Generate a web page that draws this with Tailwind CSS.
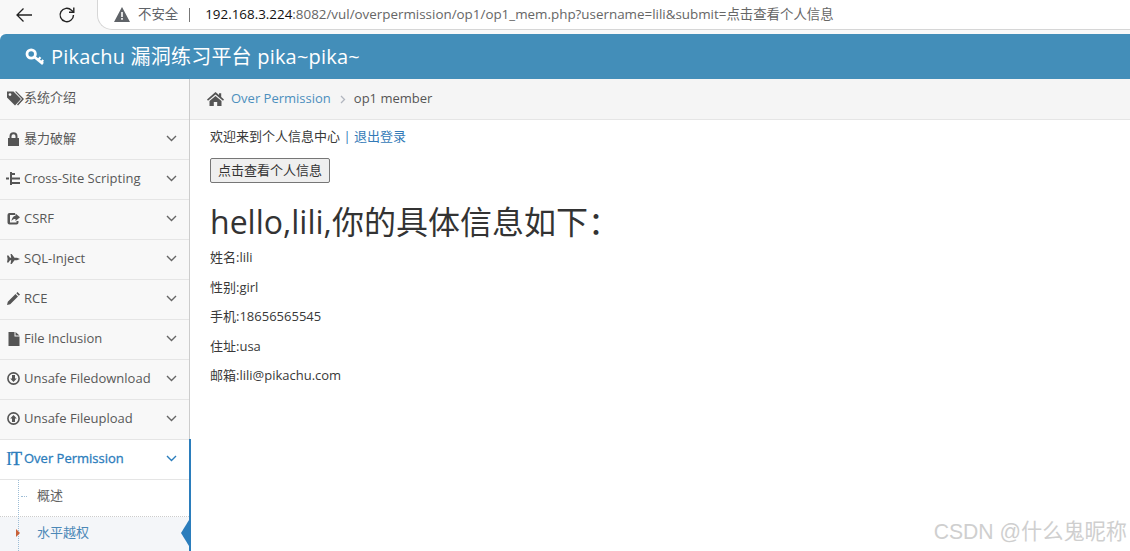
<!doctype html>
<html lang="en">

<head>
  <meta charset="UTF-8" />
  <title>Pikachu</title>
  <script src="https://cdn.jsdelivr.net/npm/@tailwindcss/browser@4"></script>
</head>

<body class="bg-white overflow-hidden font-['Open_Sans','Noto_Sans_CJK_SC',sans-serif] text-[#393939]">
  <div class="relative w-[1130px] h-[551px] overflow-hidden">
    <!-- browser bar -->
    <div class="h-[34px] bg-[#f8f8f8] flex items-start">
      <div class="w-[97px] h-[29px] flex items-center shrink-0">
        <svg class="ml-[15px]" width="18" height="16" viewBox="0 0 18 16" fill="none" stroke="#222" stroke-width="1.3">
          <path d="M17 8H2M8.5 1.5 2 8l6.5 6.5" />
        </svg>
        <svg class="ml-[25px]" width="18" height="18" viewBox="0 0 18 18" fill="none" stroke="#222" stroke-width="1.4">
          <path d="M15.5 9a6.7 6.7 0 1 1-2-4.8L15.5 6" />
          <path d="M15.8 1.5V6.3H11" />
        </svg>
      </div>
      <div class="flex-1 h-[30px] bg-white border-b border-l border-[#d6d6d6] rounded-bl-[15px] flex items-center pl-[16px] text-[13.4px] whitespace-nowrap">
        <svg width="16" height="15" viewBox="0 0 16 15">
          <path fill="#5f6368" d="M8 0 16 15H0Z" />
          <path fill="#fff" d="M7.2 5h1.6v5H7.2zM7.2 11h1.6v1.7H7.2z" />
        </svg>
        <span class="ml-[8px] text-[#5f6368]">不安全</span>
        <span class="ml-[11px] w-px h-[14px] bg-[#777]"></span>
        <span class="ml-[15px] text-[#111]">192.168.3.224</span><span class="text-[#666]">:8082/vul/overpermission/op1/op1_mem.php?username=lili&amp;submit=点击查看个人信息</span>
      </div>
    </div>

    <!-- blue header -->
    <div class="h-[45px] bg-[#438eb9] rounded-tl-[6px] flex items-center pl-[25px] text-white text-[20px] whitespace-nowrap">
      <svg width="19" height="18" viewBox="0 0 19 18" fill="none" stroke="#fff">
        <circle cx="6.200" cy="6" r="4.200" stroke-width="2.800" />
        <path d="M9.500 9 18 15.800" stroke-width="2.800" />
        <path d="m13.500 11.500 2-2.200M16.500 14l1.800-2" stroke-width="2.200" />
      </svg>
      <span class="ml-[7px] tracking-[0.2px]">Pikachu 漏洞练习平台 pika~pika~</span>
    </div>

    <div class="flex h-[472px]">
      <!-- sidebar -->
      <aside class="w-[190px] shrink-0 border-r border-[#ccc] bg-[#f8f8f8] text-[13px] text-[#585858] relative">
        <div class="h-[41px] pb-[2px] border-b border-[#e5e5e5] flex items-center pl-[7px]">
          <svg width="17" height="15" viewBox="0 0 17 15" fill="#555">
            <path fill-rule="evenodd" d="M0 .5h6.500L14 8l-6 6.500L0 6.500ZM3 2.200a1.400 1.400 0 1 0 0 2.800 1.400 1.400 0 0 0 0-2.800Z" />
            <path d="M8 .5h1.500L17 8l-6 6.500-1-1L15 8Z" />
          </svg>
          <span>系统介绍</span>
        </div>

        <div class="h-10 pb-[2px] border-b border-[#e5e5e5] flex items-center pl-[7px]">
          <svg class="w-[13px]" width="13" height="14" viewBox="0 0 13 14" fill="#555">
            <path d="M1 6h1.500V4.200a4 4 0 0 1 8 0V6H12v8H1ZM4.500 6h4V4.200a2 2 0 0 0-4 0Z" fill-rule="evenodd" />
          </svg>
          <span class="ml-[4px] flex-1">暴力破解</span>
          <svg class="mr-[12px]" width="11" height="7" viewBox="0 0 11 7" fill="none" stroke="#666" stroke-width="1.4"><path d="m1 1 4.500 4.500L10 1" /></svg>
        </div>

        <div class="h-10 pb-[2px] border-b border-[#e5e5e5] flex items-center pl-[6px]">
          <svg class="w-[14px]" width="14" height="13" viewBox="0 0 14 13" fill="#555">
            <path d="M0 5.500h3v2H0zM4 0h2v13H4zM6 1h3v2H6zM6 5.500h8v2H6zM6 10h8v2H6z" />
          </svg>
          <span class="ml-[4px] flex-1">Cross-Site Scripting</span>
          <svg class="mr-[12px]" width="11" height="7" viewBox="0 0 11 7" fill="none" stroke="#666" stroke-width="1.4"><path d="m1 1 4.500 4.500L10 1" /></svg>
        </div>

        <div class="h-10 pb-[2px] border-b border-[#e5e5e5] flex items-center pl-[7px]">
          <svg class="w-[13px]" width="13" height="13" viewBox="0 0 13 13" fill="#555">
            <path d="M2.500 1H8v2H3v7.500h6.500V9h2v1.500a2 2 0 0 1-2 2h-7a2 2 0 0 1-2-2V3a2 2 0 0 1 2-2Z" />
            <path d="M8.500 1.500 13 5.200 8.500 9V7C6.500 7 5.200 7.600 4.500 9.500 4.500 6.500 6 4 8.500 3.700Z" />
          </svg>
          <span class="ml-[4px] flex-1">CSRF</span>
          <svg class="mr-[12px]" width="11" height="7" viewBox="0 0 11 7" fill="none" stroke="#666" stroke-width="1.4"><path d="m1 1 4.500 4.500L10 1" /></svg>
        </div>

        <div class="h-10 pb-[2px] border-b border-[#e5e5e5] flex items-center pl-[7px]">
          <svg class="w-[13px]" width="13" height="10" viewBox="0 0 13 10" fill="#555">
            <path d="M0 1.500h1.500L3 3.800h1.200L3.500 0h1.200l2.800 3.800H10L13 5l-3 1.200H7.500L4.700 10H3.500l.7-3.800H3L1.500 8.500H0l.6-3.500Z" />
          </svg>
          <span class="ml-[4px] flex-1">SQL-Inject</span>
          <svg class="mr-[12px]" width="11" height="7" viewBox="0 0 11 7" fill="none" stroke="#666" stroke-width="1.4"><path d="m1 1 4.500 4.500L10 1" /></svg>
        </div>

        <div class="h-10 pb-[2px] border-b border-[#e5e5e5] flex items-center pl-[7px]">
          <svg class="w-[13px]" width="13" height="13" viewBox="0 0 13 13" fill="#555">
            <path d="M0 13 .8 9.800 8.500 2l2.500 2.500L3.200 12.200ZM9.300 1.200 10.500 0 13 2.500 11.800 3.700Z" />
          </svg>
          <span class="ml-[4px] flex-1">RCE</span>
          <svg class="mr-[12px]" width="11" height="7" viewBox="0 0 11 7" fill="none" stroke="#666" stroke-width="1.4"><path d="m1 1 4.500 4.500L10 1" /></svg>
        </div>

        <div class="h-10 pb-[2px] border-b border-[#e5e5e5] flex items-center pl-[8px]">
          <svg class="w-[12px]" width="11" height="14" viewBox="0 0 11 14" fill="#555">
            <path d="M0 0h6v4.500h5V14H0ZM7 0l4 3.500H7Z" />
          </svg>
          <span class="ml-[4px] flex-1">File Inclusion</span>
          <svg class="mr-[12px]" width="11" height="7" viewBox="0 0 11 7" fill="none" stroke="#666" stroke-width="1.4"><path d="m1 1 4.500 4.500L10 1" /></svg>
        </div>

        <div class="h-10 pb-[2px] border-b border-[#e5e5e5] flex items-center pl-[7px]">
          <svg class="w-[13px]" width="13" height="13" viewBox="0 0 13 13">
            <circle cx="6.500" cy="6.500" r="5.600" fill="none" stroke="#555" stroke-width="1.600" />
            <path fill="#555" d="M5 3h3v3.500h1.800L6.500 10 3.200 6.500H5Z" />
          </svg>
          <span class="ml-[4px] flex-1">Unsafe Filedownload</span>
          <svg class="mr-[12px]" width="11" height="7" viewBox="0 0 11 7" fill="none" stroke="#666" stroke-width="1.4"><path d="m1 1 4.500 4.500L10 1" /></svg>
        </div>

        <div class="h-10 pb-[2px] border-b border-[#e5e5e5] flex items-center pl-[7px]">
          <svg class="w-[13px]" width="13" height="13" viewBox="0 0 13 13">
            <circle cx="6.500" cy="6.500" r="5.600" fill="none" stroke="#555" stroke-width="1.600" />
            <path fill="#555" d="M5 10h3V6.500h1.800L6.500 3 3.200 6.500H5Z" />
          </svg>
          <span class="ml-[4px] flex-1">Unsafe Fileupload</span>
          <svg class="mr-[12px]" width="11" height="7" viewBox="0 0 11 7" fill="none" stroke="#666" stroke-width="1.4"><path d="m1 1 4.500 4.500L10 1" /></svg>
        </div>

        <!-- active group -->
        <div class="h-10 pb-[2px] border-b border-[#e5e5e5] bg-white flex items-center pl-[6px] text-[#2b7dbc]">
          <span class="w-[18px] flex items-baseline font-['Liberation_Serif',serif] text-[18px] leading-none"><span class="w-[5px] font-normal">I</span><span class="font-normal [-webkit-text-stroke:0.4px_#2b7dbc]">T</span></span>
          <span class="flex-1 [-webkit-text-stroke:0.3px_#2b7dbc]">Over Permission</span>
          <svg class="mr-[12px]" width="11" height="7" viewBox="0 0 11 7" fill="none" stroke="#2b7dbc" stroke-width="1.4"><path d="m1 1 4.500 4.500L10 1" /></svg>
        </div>
        <div class="relative h-[37px] pb-[4px] bg-white border-b border-dotted border-[#ccc] flex items-center pl-[37px] text-[#616161]">
          <span class="absolute left-[21px] top-[16px] w-[6px] border-t border-dotted border-[#9dbdd6]"></span>
          <span>概述</span>
        </div>
        <div class="relative h-[35px] pb-[4px] bg-[#f4f6f9] flex items-center pl-[37px] text-[#4b88b7]">
          <span class="absolute left-[16px] top-[12px] z-10 border-y-[4px] border-l-[4px] border-y-transparent border-l-[#c86139]"></span>
          <span>水平越权</span>
        </div>
        <span class="absolute left-[18px] top-[401px] h-[71px] border-l border-dotted border-[#9dbdd6]"></span>
        <span class="absolute right-[-2px] top-[360px] h-[112px] w-[2px] bg-[#2b7dbc]"></span>
        <span class="absolute right-0 top-[441px] h-[26px] w-[8px] bg-[#2b7dbc] [clip-path:polygon(0_50%,100%_0,100%_100%)]"></span>
      </aside>

      <!-- main -->
      <main class="flex-1 min-w-0 text-[13px]">
        <div class="h-[41px] bg-[#f5f5f5] border-b border-[#e5e5e5] flex items-center pl-[17px] whitespace-nowrap">
          <svg width="17" height="14" viewBox="0 0 17 14" fill="#555">
            <path d="M8.500 0 12 3V1.200h2.200V5L17 7.500 16 8.700 8.500 2.500 1 8.700 0 7.500Z" />
            <path d="M8.500 4 14.500 9v5H10.200V10H6.800v4H2.500V9Z" />
          </svg>
          <span class="ml-[7px] text-[#4c8fbd]">Over Permission</span>
          <svg class="ml-[9px]" width="6" height="9" viewBox="0 0 6 9" fill="none" stroke="#b2b6bf" stroke-width="1.3"><path d="m1 1 3.500 3.500L1 8" /></svg>
          <span class="ml-[8px] text-[#555]">op1 member</span>
        </div>
        <div class="pl-[20px] pt-[7px]">
          <p class="leading-[19px]">欢迎来到个人信息中心 <span class="text-[#337ab7]">| 退出登录</span></p>
          <button class="block mt-[12px] w-[120px] h-[25px] bg-[#efefef] border border-[#767676] rounded-[2px] text-[13px] text-[#333]">点击查看个人信息</button>
          <h1 class="mt-[22px] text-[32px] leading-[33px] text-[#333]">hello,lili,你的具体信息如下：</h1>
          <div class="mt-[10px] space-y-[10.6px] leading-[19px]">
            <p>姓名:lili</p>
            <p>性别:girl</p>
            <p>手机:18656565545</p>
            <p>住址:usa</p>
            <p>邮箱:lili@pikachu.com</p>
          </div>
        </div>
      </main>
    </div>

    <!-- watermark over the page corner -->
    <span class="absolute right-[3px] top-[519px] text-[21.2px] leading-[26px] text-[#cfcfcf] whitespace-nowrap font-['Liberation_Sans','Noto_Sans_CJK_SC',sans-serif]">CSDN @什么鬼昵称</span>
  </div>
</body>

</html>
